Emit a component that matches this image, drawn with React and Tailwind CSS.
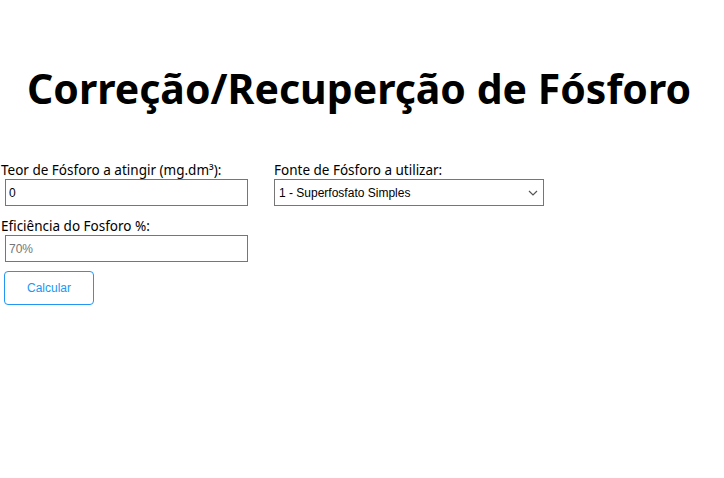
export default function App() {
  return (
    <div className="w-[724px] h-[478px] bg-white font-['Noto_Sans',sans-serif] text-black">
      <h1 className="pt-[58px] pr-[6px] text-center text-[41px] font-bold leading-[60px]">
        Correção/Recuperção de Fósforo
      </h1>

      <div className="mt-[44px] flex gap-[26px]">
        <div className="flex flex-col w-[248px]">
          <label className="relative z-10 text-[13.5px] leading-[17px] pl-[1px]">
            Teor de Fósforo a atingir (mg.dm³):
          </label>
          <input
            type="text"
            defaultValue="0"
            className="ml-[5px] h-[27px] w-[243px] border border-[#767676] bg-transparent px-[3px] text-[12px] font-['Liberation_Sans',sans-serif] outline-none"
          />
          <label className="relative z-10 mt-[12px] text-[13.5px] leading-[17px] pl-[1px]">
            Eficiência do Fosforo %:
          </label>
          <input
            type="text"
            placeholder="70%"
            className="ml-[5px] h-[27px] w-[243px] border border-[#767676] bg-transparent px-[3px] text-[12px] font-['Liberation_Sans',sans-serif] placeholder:text-[#757575] outline-none"
          />
          <button className="ml-[4px] mt-[9px] h-[34px] w-[90px] rounded-[4px] border border-[#2196f3] text-[12px] text-[#2196f3] font-['Liberation_Sans',sans-serif]">
            Calcular
          </button>
        </div>

        <div className="flex flex-col">
          <label className="relative z-10 text-[13.5px] leading-[17px]">
            Fonte de Fósforo a utilizar:
          </label>
          <div className="relative w-[270px]">
            <select className="block h-[27px] w-full appearance-none border border-[#767676] bg-white pl-[4px] text-[12px] font-['Liberation_Sans',sans-serif] outline-none">
              <option>1 - Superfosfato Simples</option>
              <option>2 - Superfosfato Triplo</option>
              <option>3 - MAP</option>
            </select>
            <svg
              className="pointer-events-none absolute right-[6px] top-[11px]"
              width="10"
              height="6"
              viewBox="0 0 10 6"
              fill="none"
              stroke="#555"
              strokeWidth="1.2"
            >
              <path d="M1 1l4 4 4-4" />
            </svg>
          </div>
        </div>
      </div>
    </div>
  );
}
